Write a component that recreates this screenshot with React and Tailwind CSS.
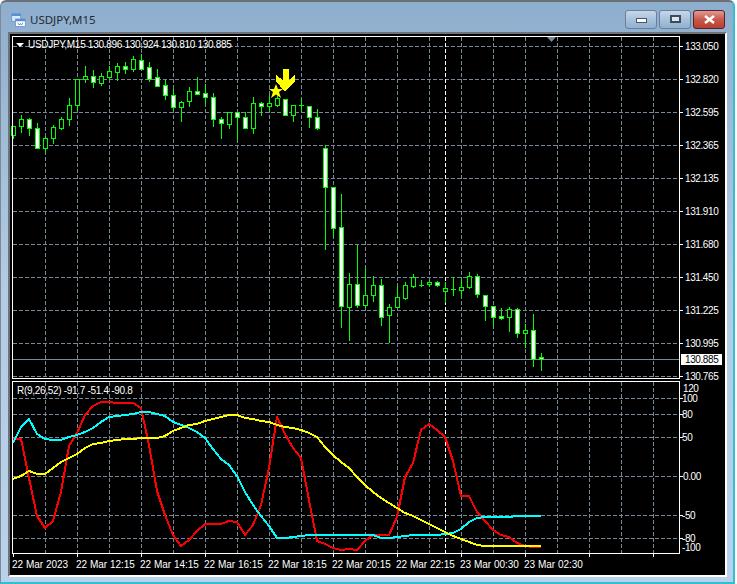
import React from 'react';

// [x, high, low, bodyTop, bodyBottom, filled]  (pixel rows of the plot)
const candles = [
  [13, 126, 139, 126, 135, 0], [21, 115, 133, 119, 126, 0], [29, 118, 136, 119, 128, 1],
  [37, 123, 148, 128, 148, 1], [45, 136, 153, 138, 148, 0], [53, 125, 144, 127, 138, 0],
  [61, 117, 130, 119, 128, 0], [69, 98, 126, 105, 119, 0], [77, 79, 111, 79, 105, 0],
  [85, 66, 83, 76, 79, 0], [93, 70, 88, 76, 82, 1], [101, 73, 86, 76, 83, 0],
  [109, 66, 80, 71, 77, 0], [117, 63, 81, 66, 72, 0], [125, 62, 74, 66, 69, 1],
  [133, 56, 72, 59, 69, 0], [141, 54, 70, 60, 69, 1], [149, 62, 82, 67, 79, 1],
  [157, 69, 87, 77, 86, 1], [165, 80, 100, 85, 95, 1], [173, 89, 111, 95, 107, 1],
  [181, 101, 122, 102, 107, 0], [189, 87, 107, 91, 101, 0], [197, 77, 95, 91, 94, 1],
  [205, 84, 105, 93, 97, 1], [213, 93, 127, 97, 119, 1], [221, 117, 139, 119, 123, 1],
  [229, 112, 129, 112, 124, 0], [237, 112, 140, 112, 117, 1], [245, 112, 128, 117, 128, 1],
  [253, 97, 134, 103, 128, 0], [261, 102, 116, 103, 106, 1], [269, 95, 112, 103, 106, 0],
  [277, 95, 107, 98, 105, 0], [285, 99, 116, 99, 115, 1], [293, 105, 122, 105, 115, 0],
  [301, 99, 112, 105, 106, 0], [309, 106, 128, 106, 117, 1], [317, 109, 130, 117, 128, 1],
  [325, 145, 250, 148, 187, 1], [333, 187, 237, 187, 228, 1], [341, 194, 328, 227, 306, 1],
  [349, 273, 341, 284, 307, 0], [357, 245, 308, 284, 305, 1], [365, 268, 308, 295, 305, 0],
  [373, 276, 302, 285, 295, 0], [381, 279, 326, 285, 317, 1], [389, 304, 343, 307, 315, 0],
  [397, 286, 307, 297, 307, 0], [405, 282, 300, 285, 298, 0], [413, 274, 288, 277, 286, 0],
  [421, 280, 287, 285, 286, 0], [429, 280, 287, 282, 284, 0], [437, 281, 287, 282, 285, 1],
  [445, 282, 303, 288, 291, 0], [453, 277, 296, 289, 290, 0], [461, 278, 297, 287, 290, 0],
  [469, 272, 289, 276, 287, 0], [477, 274, 298, 276, 294, 1], [485, 295, 321, 295, 306, 1],
  [493, 306, 327, 306, 317, 1], [501, 308, 320, 316, 318, 1], [509, 307, 332, 309, 317, 0],
  [517, 308, 338, 309, 333, 1], [525, 324, 348, 330, 333, 0], [533, 314, 367, 330, 359, 1],
  [541, 353, 371, 357, 359, 1],
];

const red = [
  439, 439, 478, 516, 528, 521, 492, 446, 433, 415, 406, 402, 402, 403, 403, 403, 408, 445, 491, 515, 535, 546, 540, 531,
  524, 524, 524, 521, 522, 535, 525, 505, 468, 417, 434, 448, 458, 500, 541, 544, 548, 550, 549, 550, 541, 535, 535, 535,
  517, 477, 463, 430, 424, 430, 437, 461, 496, 496, 512, 521, 530, 535, 537, 543, 546, 547, 547,
];
const cyan = [
  443, 427, 419, 434, 439, 440, 440, 437, 435, 432, 428, 422, 417, 416, 415, 414, 412, 412, 414, 416, 422, 425, 428, 432,
  438, 449, 459, 465, 476, 492, 505, 516, 526, 538, 538, 537, 536, 535, 535, 535, 535, 535, 535, 535, 535, 535, 538, 538,
  537, 536, 535, 535, 535, 535, 534, 533, 529, 522, 518, 517, 517, 517, 517, 516, 516, 516, 516,
];
const yellow = [
  479, 476, 471, 474, 474, 468, 462, 458, 454, 448, 444, 443, 441, 440, 439, 439, 438, 438, 438, 436, 431, 428, 425, 424,
  421, 419, 417, 415, 415, 418, 419, 421, 422, 425, 427, 428, 430, 433, 437, 447, 455, 462, 468, 477, 485, 492, 498, 503,
  508, 513, 516, 520, 524, 528, 532, 536, 539, 542, 545, 546, 546, 546, 546, 546, 546, 546, 546,
];

const gridX = Array.from({ length: 21 }, (_, i) => 13 + i * 32);
const priceRows = [
  ['133.050', 46], ['132.820', 79], ['132.595', 112], ['132.365', 145], ['132.135', 178], ['131.910', 211],
  ['131.680', 244], ['131.450', 277], ['131.225', 310], ['130.995', 343], ['130.765', 376],
];
const levelRows = [['100', 398, 682], ['80', 414, 682], ['50', 437, 682], ['0.00', 476, 683], ['-50', 515, 682], ['-80', 538, 682]];
const times = [
  '22 Mar 2023', '22 Mar 12:15', '22 Mar 14:15', '22 Mar 16:15', '22 Mar 18:15',
  '22 Mar 20:15', '22 Mar 22:15', '23 Mar 00:30', '23 Mar 02:30',
];

const toPoints = (values) => values.map((y, i) => `${13 + i * 8},${y}`).join(' ');

function Grid({ top, bottom, rows }) {
  return (
    <g stroke="#778899" strokeDasharray="4 2" shapeRendering="crispEdges">
      {gridX.filter((x) => x > 13).map((x) => (
        <line key={x} x1={x + 0.5} x2={x + 0.5} y1={top} y2={bottom} />
      ))}
      {rows.map((y) => (
        <line key={y} x1={13} x2={679} y1={y + 0.5} y2={y + 0.5} />
      ))}
      <line x1={445.5} x2={445.5} y1={top} y2={bottom} stroke="#ffffff" />
    </g>
  );
}

function Candle({ c }) {
  const [x, high, low, top, bottom, filled] = c;
  const flat = bottom - top < 2;
  return (
    <g shapeRendering="crispEdges">
      <rect x={x} y={high} width={1} height={low - high} fill="#00ff00" />
      {flat ? (
        <rect x={x - 2} y={top} width={5} height={1} fill="#00ff00" />
      ) : (
        <rect
          x={x - 1.5}
          y={top + 0.5}
          width={4}
          height={bottom - top}
          fill={filled ? '#ffffff' : '#000000'}
          stroke="#00ff00"
        />
      )}
    </g>
  );
}

function MainChart() {
  return (
    <svg viewBox="12 36 713 344" className="block h-[344px] w-[713px] overflow-visible">
      <Grid top={37} bottom={379} rows={priceRows.map((r) => r[1])} />
      <rect x={13} y={359} width={667} height={1} fill="#778899" />
      {candles.map((c) => (
        <Candle key={c[0]} c={c} />
      ))}
      <polygon
        points="283,69 289,69 289,80 295,75 295,81 285,92 276,81 276,75 283,80"
        fill="#ffff00"
        shapeRendering="crispEdges"
      />
      <polygon
        points="276,84 278,89 283,89 279,92 281,98 276,94.500 271,98 273,92 269,89 274,89"
        fill="#ffff00"
      />
      <polygon points="547,37 556,37 551.500,42" fill="#778899" />
      <polygon points="16,43 24,43 20,47" fill="#ffffff" />
      <rect x={12.500} y={36.500} width={667} height={342} fill="none" stroke="#ffffff" shapeRendering="crispEdges" />
      <text x={28} y={48} fill="#ffffff" fontSize={10} letterSpacing={-0.3}>
        USDJPY,M15 130.896 130.924 130.810 130.885
      </text>
      {priceRows.map(([label, y]) => (
        <g key={label}>
          <rect x={680} y={y} width={3} height={1} fill="#ffffff" shapeRendering="crispEdges" />
          <text x={685} y={y + 4} fill="#ffffff" fontSize={10} letterSpacing={-0.4}>{label}</text>
        </g>
      ))}
      <rect x={681} y={354} width={41} height={11} fill="#ffffff" shapeRendering="crispEdges" />
      <text x={685} y={363} fill="#000000" fontSize={10} letterSpacing={-0.4}>130.885</text>
    </svg>
  );
}

function IndicatorChart() {
  return (
    <svg viewBox="12 381 713 177" className="block h-[177px] w-[713px] overflow-visible">
      <Grid top={382} bottom={554} rows={levelRows.map((r) => r[1])} />
      <g fill="none" strokeWidth={2} shapeRendering="crispEdges" strokeLinejoin="round">
        <polyline points={toPoints(red)} stroke="#ff0000" />
        <polyline points={toPoints(cyan)} stroke="#00ffff" />
        <polyline points={toPoints(yellow)} stroke="#ffff00" />
      </g>
      <rect x={12.500} y={381.500} width={667} height={172} fill="none" stroke="#ffffff" shapeRendering="crispEdges" />
      {gridX.filter((x, i) => i % 2 === 0 && x < 680).map((x) => (
        <rect key={x} x={x} y={554} width={1} height={3} fill="#ffffff" shapeRendering="crispEdges" />
      ))}
      <text x={17} y={394} fill="#ffffff" fontSize={10} letterSpacing={-0.3}>R(9,26,52) -91.7 -51.4 -90.8</text>
      <text x={683} y={392} fill="#ffffff" fontSize={10} letterSpacing={-0.4}>120</text>
      {levelRows.map(([label, y, x]) => (
        <g key={label}>
          <rect x={680} y={y} width={3} height={1} fill="#ffffff" shapeRendering="crispEdges" />
          <text x={x} y={y + 4} fill="#ffffff" fontSize={10} letterSpacing={-0.4}>{label}</text>
        </g>
      ))}
      <text x={682} y={551} fill="#ffffff" fontSize={10} letterSpacing={-0.4}>-100</text>
    </svg>
  );
}

function CaptionButton({ kind }) {
  const isClose = kind === 'close';
  return (
    <button
      className={
        isClose
          ? 'flex h-[19px] w-[32px] items-center justify-center rounded-[3px] border border-[#5a1f2a] bg-gradient-to-b from-[#dd9b93] via-[#c8584a] to-[#b8402f]'
          : 'flex h-[19px] w-[32px] items-center justify-center rounded-[3px] border border-[#6b7f98] bg-gradient-to-b from-[#c6d8ea] via-[#a8c2dc] to-[#8fb0cf]'
      }
    >
      {kind === 'min' && <span className="mt-[3px] block h-[5px] w-[11px] border border-[#4b5563] bg-white" />}
      {kind === 'max' && <span className="block h-[8px] w-[11px] border-2 border-[#3f4a5a] bg-[#dce6f0]" />}
      {isClose && (
        <svg width="11" height="9" viewBox="0 0 11 9">
          <path d="M1 1 L10 8 M10 1 L1 8" stroke="#ffffff" strokeWidth="2.500" />
        </svg>
      )}
    </button>
  );
}

function WindowIcon() {
  return (
    <svg width="15" height="15" viewBox="0 0 20 20" className="shrink-0">
      <rect x="1" y="1" width="12" height="10" fill="#dbeafe" stroke="#5b8fd0" />
      <rect x="1" y="1" width="12" height="3" fill="#5b8fd0" />
      <rect x="6" y="8" width="13" height="10" fill="#ffffff" stroke="#5b8fd0" />
      <rect x="6" y="8" width="13" height="3" fill="#5b8fd0" />
      <path d="M9 13 L11 16 L12.500 14 L14 16 L16 13" fill="none" stroke="#3b6fb0" />
    </svg>
  );
}

export default function App() {
  return (
    <div className="h-[584px] w-[737px] bg-white font-['Liberation_Sans',Arial,sans-serif]">
      <div className="flex h-[584px] w-[735px] flex-col rounded-t-[6px] border-t-2 border-l border-b-2 border-r-2 border-t-[#6b6f75] border-l-[#7d8a96] border-b-[#2fc0d4] border-r-[#2fc0d4] bg-gradient-to-b from-[#8eaecd] via-[#b3cce4] to-[#b9d1ea] pr-[6px] pl-[7px]">
        <div className="flex h-[30px] shrink-0 items-center">
          <div className="mt-[6px] ml-[3px] flex items-center gap-[4px]">
            <WindowIcon />
            <span className="font-['Noto_Sans',sans-serif] text-[11.500px] text-[#1f2933]">USDJPY,M15</span>
          </div>
          <div className="mt-[4px] mr-[2px] ml-auto flex gap-[2px]">
            <CaptionButton kind="min" />
            <CaptionButton kind="max" />
            <CaptionButton kind="close" />
          </div>
        </div>
        <div className="flex h-[545px] w-[719px] shrink-0 flex-col border-t-2 border-r-2 border-b-2 border-l-2 border-t-[#6f7276] border-r-white border-b-white border-l-[#6f7276] bg-black pt-[2px] pl-[2px]">
          <MainChart />
          <div className="mt-[1px]">
            <IndicatorChart />
          </div>
          <div className="-mt-[1px] flex text-[10px] text-white">
            {times.map((t) => (
              <span key={t} className="w-[64px] shrink-0 whitespace-nowrap">{t}</span>
            ))}
          </div>
        </div>
      </div>
    </div>
  );
}
